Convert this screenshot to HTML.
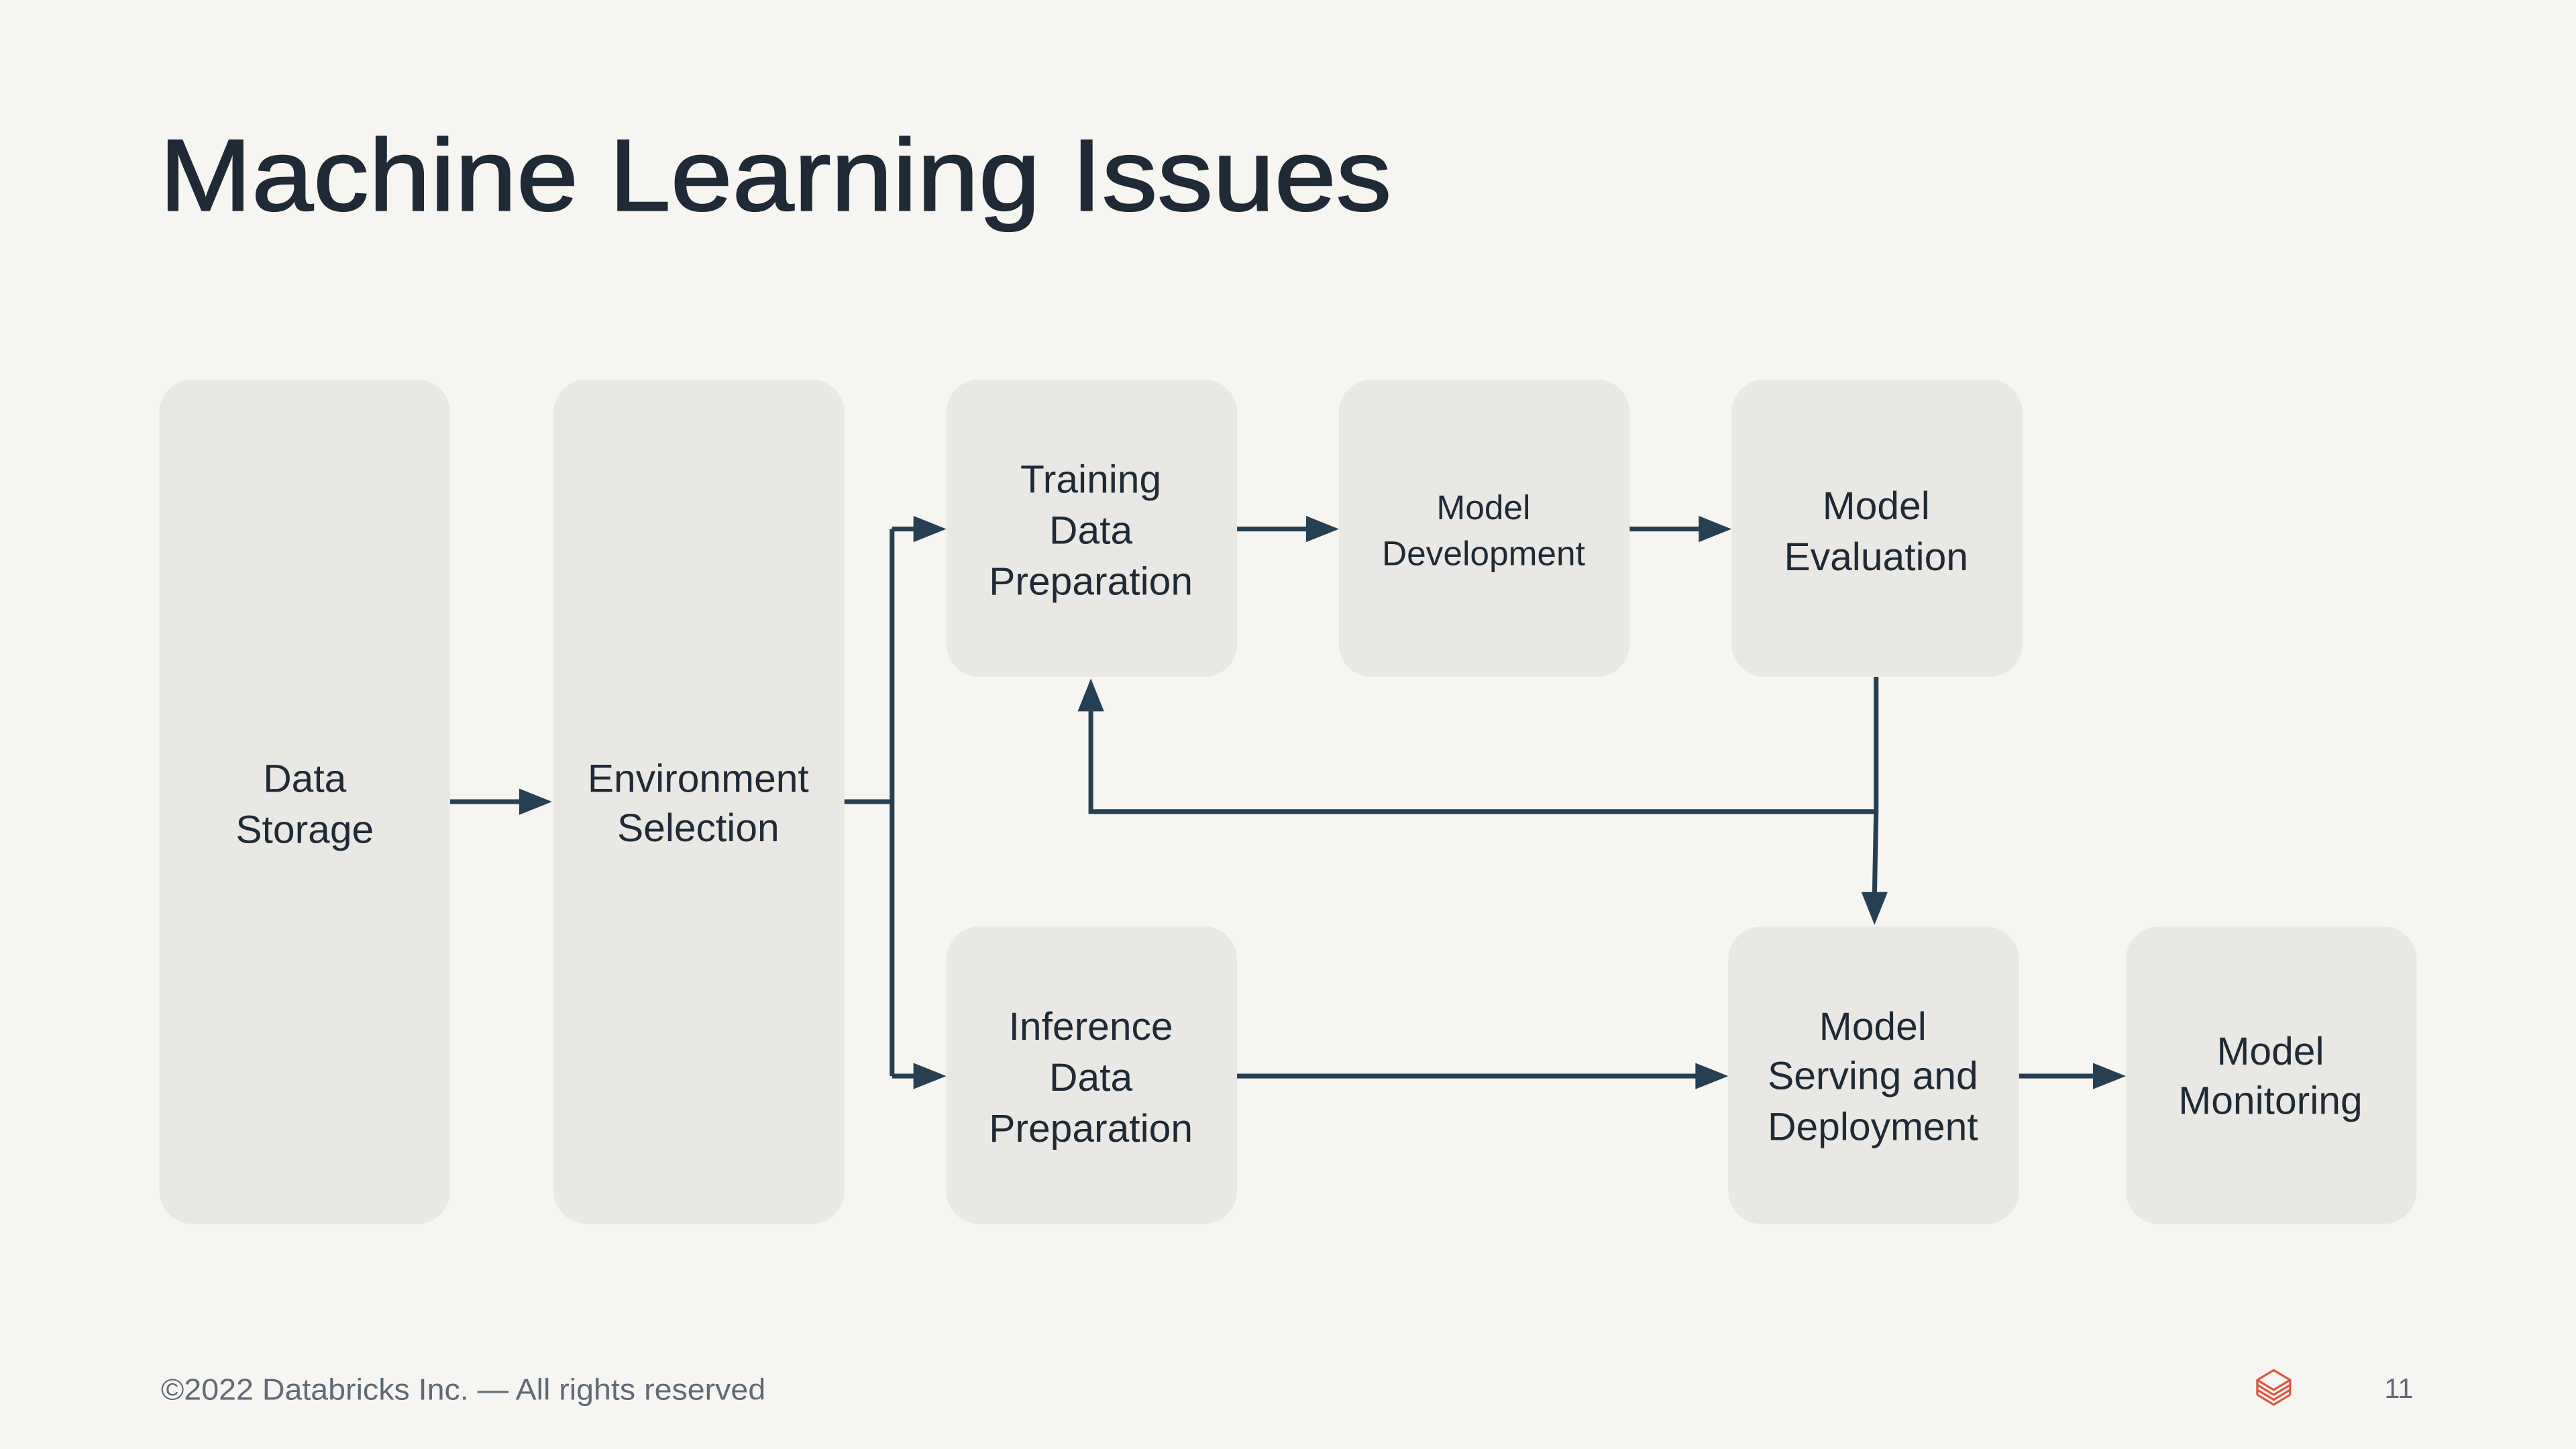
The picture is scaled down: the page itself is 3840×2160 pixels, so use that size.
<!DOCTYPE html>
<html><head><meta charset="utf-8"><style>
html,body{margin:0;padding:0;background:#f6f5f1;}
svg{display:block;width:3840px;height:2160px;}
text{font-family:"Liberation Sans",sans-serif;}
</style></head><body>
<svg viewBox="0 0 1568 882" preserveAspectRatio="none" xmlns="http://www.w3.org/2000/svg">
<rect width="1568" height="882" fill="#f6f5f1"/>
<text x="97" y="128" font-size="62" fill="#1f2a36" stroke="#1f2a36" stroke-width="0.9" textLength="750" lengthAdjust="spacingAndGlyphs">Machine Learning Issues</text>
<g fill="#e9e8e4">
<rect x="97" y="231" width="177" height="514" rx="20"/>
<rect x="337" y="231" width="177" height="514" rx="20"/>
<rect x="576" y="231" width="177" height="181" rx="20"/>
<rect x="815" y="231" width="177" height="181" rx="20"/>
<rect x="1054" y="231" width="177" height="181" rx="20"/>
<rect x="576" y="564" width="177" height="181" rx="20"/>
<rect x="1052" y="564" width="177" height="181" rx="20"/>
<rect x="1294" y="564" width="177" height="181" rx="20"/>
</g>
<g fill="#1f2a36" font-size="24" text-anchor="middle">
<text x="185.5" y="482">Data</text><text x="185.5" y="513">Storage</text>
<text x="425" y="482">Environment</text><text x="425" y="512">Selection</text>
<text x="664" y="300">Training</text><text x="664" y="331">Data</text><text x="664" y="362">Preparation</text>
<text x="903" y="316" font-size="21">Model</text><text x="903" y="344" font-size="21">Development</text>
<text x="1142" y="316">Model</text><text x="1142" y="347">Evaluation</text>
<text x="664" y="633">Inference</text><text x="664" y="664">Data</text><text x="664" y="695">Preparation</text>
<text x="1140" y="633">Model</text><text x="1140" y="663">Serving and</text><text x="1140" y="694">Deployment</text>
<text x="1382" y="648">Model</text><text x="1382" y="678">Monitoring</text>
</g>
<g stroke="#263f52" stroke-width="2.9" fill="none">
<path d="M274 488H318"/>
<path d="M514 488H543M543 322V655M543 322H560M543 655H560"/>
<path d="M753 322H798"/>
<path d="M992 322H1037"/>
<path d="M1142 412V494L1141 546"/>
<path d="M1142 494H664V432"/>
<path d="M753 655H1035"/>
<path d="M1229 655H1277"/>
</g>
<g fill="#263f52">
<path d="M336 488L316 480V496Z"/>
<path d="M576 322L556 314V330Z"/>
<path d="M576 655L556 647V663Z"/>
<path d="M815 322L795 314V330Z"/>
<path d="M1054 322L1034 314V330Z"/>
<path d="M1141 563L1133 543H1149Z"/>
<path d="M664 413L656 433H672Z"/>
<path d="M1052 655L1032 647V663Z"/>
<path d="M1294 655L1274 647V663Z"/>
</g>
<text x="98" y="852" font-size="18" fill="#5f6b76" textLength="368" lengthAdjust="spacingAndGlyphs">©2022 Databricks Inc. — All rights reserved</text>
<text x="1469" y="851" font-size="17" fill="#5f6b76" text-anchor="end">11</text>
<g stroke="#e0533e" stroke-width="1.3" fill="none" stroke-linejoin="round">
<path d="M1384 834L1394 840L1384 846L1374 840Z"/>
<path d="M1374 843L1384 849L1394 843"/>
<path d="M1374 846L1384 852L1394 846"/>
<path d="M1374 849L1384 855L1394 849"/>
<path d="M1374 840V849M1394 840V849"/>
</g>
</svg>
</body></html>
